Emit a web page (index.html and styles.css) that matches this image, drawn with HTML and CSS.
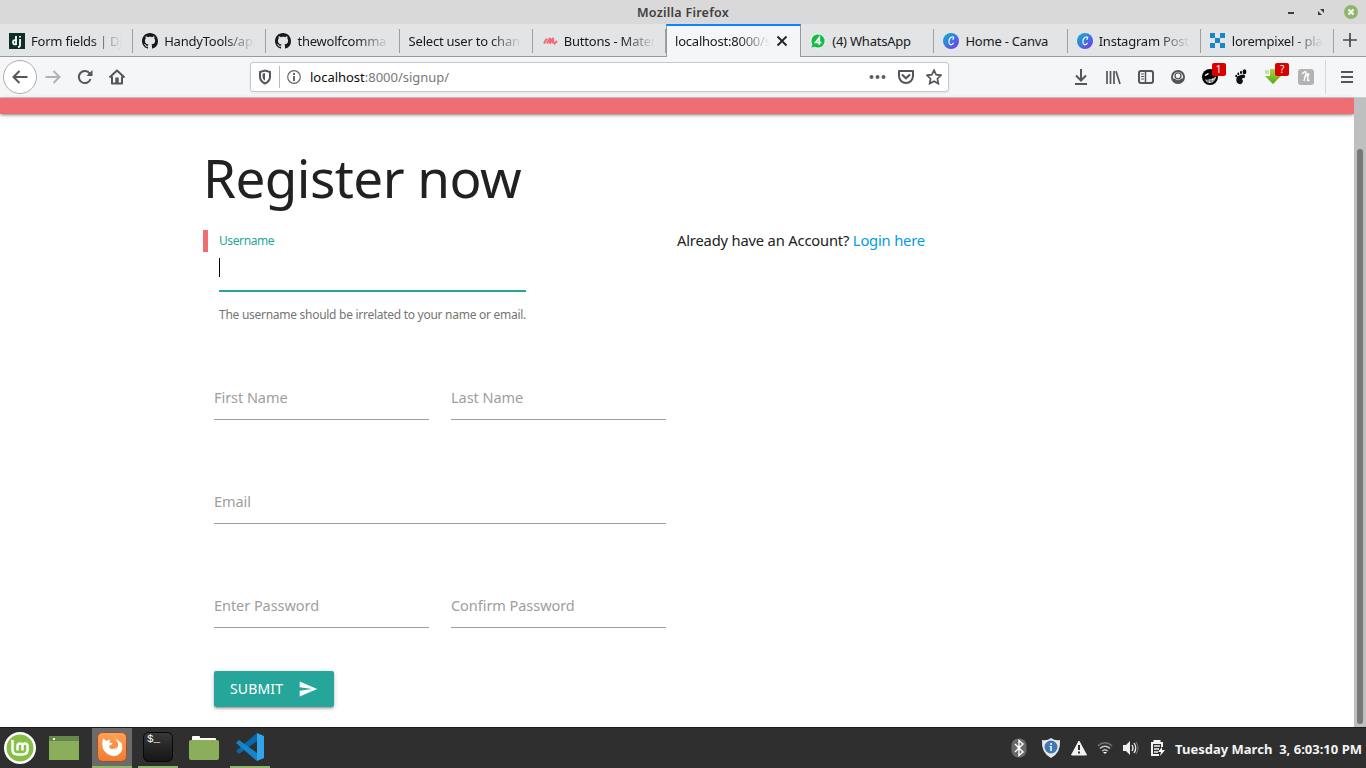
FILE: index.html
```html
<!DOCTYPE html>
<html lang="en">
<head>
<meta charset="utf-8">
<title>Register</title>
<link rel="stylesheet" href="styles.css">
</head>
<body>
<svg class="defs" width="0" height="0">
  <defs>
    <linearGradient id="canva" x1="0" y1="0" x2="1" y2="1"><stop offset="0" stop-color="#08b6cc"/><stop offset=".5" stop-color="#3c78dc"/><stop offset="1" stop-color="#7b2bea"/></linearGradient>
    <linearGradient id="orange" x1="0" y1="0" x2="0" y2="1"><stop offset="0" stop-color="#ffa257"/><stop offset="1" stop-color="#f07b32"/></linearGradient>
    <linearGradient id="black" x1="0" y1="0" x2="0" y2="1"><stop offset="0" stop-color="#383838"/><stop offset="1" stop-color="#151515"/></linearGradient>
    <linearGradient id="lime" x1="0" y1="0" x2="0" y2="1"><stop offset="0" stop-color="#a5d94c"/><stop offset="1" stop-color="#56a50b"/></linearGradient>
    <symbol id="github" viewBox="0 0 16 16"><path fill="#17191c" d="M8 0C3.58 0 0 3.58 0 8c0 3.54 2.29 6.53 5.47 7.59.4.07.55-.17.55-.38 0-.19-.01-.82-.01-1.49-2.01.37-2.53-.49-2.69-.94-.09-.23-.48-.94-.82-1.13-.28-.15-.68-.52-.01-.53.63-.01 1.08.58 1.23.82.72 1.21 1.87.87 2.33.66.07-.52.28-.87.51-1.07-1.78-.2-3.64-.89-3.64-3.95 0-.87.31-1.59.82-2.15-.08-.2-.36-1.02.08-2.12 0 0 .67-.21 2.2.82.64-.18 1.32-.27 2-.27s1.36.09 2 .27c1.53-1.04 2.2-.82 2.2-.82.44 1.1.16 1.92.08 2.12.51.56.82 1.27.82 2.15 0 3.07-1.87 3.75-3.65 3.95.29.25.54.73.54 1.48 0 1.07-.01 1.93-.01 2.2 0 .21.15.46.55.38A8.01 8.01 0 0 0 16 8c0-4.42-3.58-8-8-8z"/></symbol>
    <symbol id="canvaicon" viewBox="0 0 16 16"><circle cx="8" cy="8" r="8" fill="url(#canva)"/><path d="M10 6.2c1-1 .8-2.3-.6-2.3C7.500 3.900 5.900 6.400 5.900 9c0 3.300 2.600 3.500 4.300 1.300" fill="none" stroke="#e4f5ff" stroke-width="1.300" stroke-linecap="round"/></symbol>
  </defs>
</svg>

<header class="titlebar">
  <span class="window-title">Mozilla Firefox</span>
  <div class="window-controls">
    <svg class="minimize" width="10" height="16"><path d="M2 8h6v2H2z" fill="#3c3c3c"/></svg>
    <svg width="10" height="16"><path d="M4 5h4v4zM2 7l4 4H2z" fill="#3c3c3c"/></svg>
    <svg width="14" height="16"><circle cx="7" cy="8" r="7" fill="#8fb56b"/><path d="M4.500 5.500l5 5m0-5l-5 5" stroke="#fff" stroke-width="2"/></svg>
  </div>
</header>

<nav class="tabstrip">
  <div class="tabs">
    <div class="tab"><svg width="16" height="16"><path d="M0 0h16v16H0z" fill="#0c3025"/><path d="M7 3v9M7 7.300C3 6 3 12.500 7 11.300M11 6v6.500q0 1.500-2 1.500M11 3v1.500" fill="none" stroke="#fff" stroke-width="1.800"/></svg><span class="label">Form fields | Dj</span></div>
    <div class="tab"><svg width="16" height="16"><use href="#github"/></svg><span class="label">HandyTools/app</span></div>
    <div class="tab"><svg width="16" height="16"><use href="#github"/></svg><span class="label">thewolfcomma</span></div>
    <div class="tab"><span class="label">Select user to chan</span></div>
    <div class="tab"><svg width="16" height="16"><path d="M2 10.500l2.800-5M5 10.500l3-5.500v5.500L11 5v5.500M12 9l.6 1.500L15 8" fill="none" stroke="#f46877" stroke-width="2"/></svg><span class="label">Buttons - Mater</span></div>
    <div class="tab active"><span class="label">localhost:8000/s</span><svg class="close" width="12" height="12"><path d="M1.500 1.500l9 9m0-9l-9 9" stroke="#202124" stroke-width="1.800"/></svg></div>
    <div class="tab"><svg width="16" height="16"><path d="M8 1a7 7 0 1 1-3.200 13.200L.7 15.400l1.200-4A7 7 0 0 1 8 1z" fill="#12bd45" stroke="#fff" stroke-width=".8"/><path d="M9.300 12V4.500L5.500 9.500h6" fill="none" stroke="#fff" stroke-width="1.600"/></svg><span class="label whole">(4) WhatsApp</span></div>
    <div class="tab"><svg width="16" height="16"><use href="#canvaicon"/></svg><span class="label whole">Home - Canva</span></div>
    <div class="tab"><svg width="16" height="16"><use href="#canvaicon"/></svg><span class="label">Instagram Post</span></div>
    <div class="tab"><svg width="16" height="16"><path fill="#1687c9" d="M0 0h5v5H0zM10 0h5v5h-5zM5 5h5v5H5zM0 10h5v5H0zM10 10h5v5h-5z"/></svg><span class="label">lorempixel - pla</span></div>
  </div>
  <svg class="newtab" width="14" height="14"><path d="M7 0v14M0 7h14" stroke="#4a4a4f" stroke-width="1.700"/></svg>
</nav>

<div class="toolbar">
  <div class="nav-buttons">
    <span class="back"><svg width="18" height="16"><path d="M16.500 8H2.500M8.500 2L2.500 8l6 6" class="ico"/></svg></span>
    <svg width="18" height="16" class="faded"><path d="M1.500 8h14M9.500 2l6 6-6 6" class="ico"/></svg>
    <svg width="16" height="16"><path d="M13.500 10A6 6 0 1 1 12.700 4.600" class="ico"/><path d="M15.500 1v6h-6z" fill="#55565b"/></svg>
    <svg width="18" height="16"><path d="M1.500 8.500L9 1.500l7.500 7M4 7.500v7h10v-7" class="ico" stroke-linejoin="round"/><path d="M7.300 8.500h3.400v6H7.300z" fill="#55565b"/></svg>
  </div>
  <div class="urlbar">
    <svg width="12" height="16"><path d="M1 3l5-1.500L11 3v5q0 4-5 6.500Q1 12 1 8z" class="ico"/><path d="M6 4L3.500 4.800V8q0 2.500 2.500 3.800z" fill="#55565b"/></svg>
    <i class="url-sep"></i>
    <svg width="14" height="14"><circle cx="7" cy="7" r="6.300" fill="none" stroke="#66676b" stroke-width="1.200"/><path d="M6 6h2v5H6zM6 3h2v2H6z" fill="#66676b"/></svg>
    <span class="url"><b>localhost</b>:8000/signup/</span>
    <div class="url-actions">
      <svg width="17" height="16" fill="#5c5d61"><circle cx="2.500" cy="8" r="2"/><circle cx="8.500" cy="8" r="2"/><circle cx="14.500" cy="8" r="2"/></svg>
      <svg width="16" height="16"><path d="M1 2h14v5a7 7 0 0 1-14 0z" class="ico" stroke-linejoin="round"/><path d="M4.500 6L8 9.300 11.500 6" class="ico" stroke-linecap="round"/></svg>
      <svg width="16" height="16"><path d="M8 1.200l2.100 4.500 4.900.6-3.600 3.400.9 4.900L8 12.200l-4.300 2.400.9-4.900L1 6.300l4.900-.6z" class="ico medium"/></svg>
    </div>
  </div>
  <div class="extensions">
    <svg width="14" height="16"><path d="M7 0v11M2 6.500l5 5 5-5M1 15h12" class="ico"/></svg>
    <svg width="16" height="16"><path d="M2 2v13M5.500 2v13M9 2v13M11 2.300L15 15" class="ico medium"/></svg>
    <svg width="16" height="16"><rect x="1" y="2" width="14" height="12" rx="2" class="ico"/><path d="M7.500 2v12" class="ico narrow"/><path d="M3 5h3M3 7.500h3M3 10h3" class="ico thin"/></svg>
    <svg width="14" height="16"><circle cx="7" cy="8" r="6" class="ico"/><path d="M1 9.500h2.500Q7 13 10.500 9.500H13Q12 14.500 7 14.500T1 9.500z" fill="#55565b"/><circle cx="7" cy="6.800" r="3" fill="#f5f6f8" stroke="#55565b" stroke-width="1.300"/></svg>
    <div class="ext"><svg width="16" height="16"><circle cx="8" cy="8" r="8" fill="#000"/><path d="M2.500 6l3.500-2 1 1-3.500 2zM3 10.500q6 1 11-3-1 6.500-6 6.500-3.500 0-5-3.500z" fill="#fff"/><path d="M6 10v4M9 9v5M12 8v4M3 12h9" stroke="#000" stroke-width=".6"/></svg><span class="badge">1</span></div>
    <svg width="14" height="16"><path d="M3 7.500q7-3.500 8-1 .7 2.500-2 2.700-2 .3-.8 1.300 1.500 1 .3 3-1.500 2.500-4 1.300Q1 13 3 7.500z" fill="#111"/><ellipse cx="10.500" cy="2.700" rx="1.900" ry="2.500"/><ellipse cx="7" cy="3.400" rx="1" ry="1.600"/><ellipse cx="4.300" cy="4.900" rx=".9" ry="1.400"/><ellipse cx="2.200" cy="7" rx=".9" ry="1.200"/></svg>
    <div class="ext"><svg width="16" height="16"><path d="M5 0h6v7h5l-8 8-8-8h5z" fill="url(#lime)"/><path d="M1 1v4M3 1v4" stroke="#94c951"/></svg><span class="badge">?</span></div>
    <svg width="16" height="16"><rect width="16" height="16" rx="3" fill="#b3b3b3"/><path d="M4 5q4-4 4-1L6 12M6.500 8q4-3 3.500 0l-.5 3q0 1 2 0M8.500 5.500h3M10 4v3" fill="none" stroke="#fff" stroke-width="1.400"/></svg>
  </div>
  <div class="menu"><svg width="12" height="16"><path d="M0 3h12M0 8h12M0 13h12" class="ico"/></svg></div>
</div>

<main class="viewport">
  <div class="page">
    <div class="navbar"></div>
    <div class="container">
      <h2>Register now</h2>
      <div class="row">
        <form class="form">
          <div class="username-wrap">
            <label class="username-label">Username</label>
            <div class="username-input"><i class="caret"></i></div>
            <p class="helper">The username should be irrelated to your name or email.</p>
          </div>
          <div class="fields names">
            <div class="field">First Name</div>
            <div class="field">Last Name</div>
          </div>
          <div class="fields"><div class="field">Email</div></div>
          <div class="fields">
            <div class="field">Enter Password</div>
            <div class="field">Confirm Password</div>
          </div>
          <button type="button" class="submit"><span>SUBMIT</span><svg width="20" height="20" viewBox="0 0 24 24"><path fill="#fff" d="M2.010 21L23 12 2.010 3 2 10l15 2-15 2z"/></svg></button>
        </form>
        <p class="login">Already have an Account? <a>Login here</a></p>
      </div>
    </div>
  </div>
  <div class="scrollbar"><div class="thumb"></div></div>
</main>

<footer class="taskbar">
  <div class="apps">
    <div class="app mint"><svg width="32" height="32"><circle cx="16" cy="16" r="16" fill="#fff"/><circle cx="16" cy="16" r="13.500" fill="#87bf47"/><path d="M8.500 8v9.500q0 5 5 5h5q5 0 5-5V14q0-2.500-2.500-2.500T18.500 14v4.500M18.500 14q0-2.500-2.500-2.500T13.500 14v4.500" fill="none" stroke="#fff" stroke-width="2.500"/></svg></div>
    <div class="app desktop"><svg width="30" height="24"><path d="M0 0h30v24H0z" fill="#8aae59"/><path d="M0 0h30v5H0z" fill="#65874a"/><path d="M4 2h2v2H4z" fill="#fff"/></svg></div>
    <div class="app open current"><svg width="30" height="30"><rect x=".5" y=".5" width="29" height="29" rx="5" fill="url(#orange)" stroke="#9b5227"/><path d="M6 6.500L9.500 9q2-1.500 4-1.500-1.500 1.500-1 3l3 .7q-1 2-3.500 2.800.5 3.500 4 3 2.500-.5 4-2-1 2.500-3 3 3-.5 4-4 .8-4-3-7.500 4.500 2 5.500 5V9q4 7-.5 12.500-6 5-12.500.500Q3 17 6 6.500z" fill="#fff"/></svg></div>
    <div class="app open"><svg width="30" height="30"><rect x=".5" y=".5" width="29" height="29" rx="5" fill="url(#black)" stroke="#080808"/></svg><span class="prompt">$_</span></div>
    <div class="app"><svg width="30" height="26"><path d="M3 4V2q0-1 1-1h6q1 0 1 1v1h15q1 0 1 1v2H3z" fill="#fff"/><rect y="5" width="30" height="20" rx="2" fill="#8aae59"/></svg></div>
    <div class="app open"><svg width="28" height="28" viewBox="0 0 28 28"><path d="M21 0v8L3 21l-3-3z" fill="#0868ad"/><path d="M0 10l3-3 18 13v8z" fill="#1784ca"/><path d="M21 0l7 3v22l-7 3z" fill="#30a5ec"/></svg></div>
  </div>
  <div class="tray">
    <svg class="bluetooth" width="16" height="20"><rect x=".5" y=".5" width="15" height="19" rx="7" fill="#696969"/><path d="M4 6l8 8-4 3.500v-15L12 6l-8 8" fill="none" stroke="#fff" stroke-width="1.400"/></svg>
    <svg width="20" height="20"><path d="M10 0q4 3 9 2 1 13-9 18Q0 15 1 2q5 1 9-2z" fill="#e8e8e8"/><circle cx="10" cy="9" r="6.500" fill="#4178b9"/><path d="M9.300 5h1.500v2H9.300zM8.500 8h2.300v5H9.300V9h-.8z" fill="#fff"/></svg>
    <svg width="16" height="16"><path d="M8 1l7.500 14H.5z" fill="#f2f2f2" stroke="#f2f2f2" stroke-linejoin="round"/><path d="M7 5h2v5H7zM7 11.500h2v2H7z" fill="#2f2f2f"/></svg>
    <svg width="16" height="14"><path d="M.8 5q7.200-6.500 14.400 0" fill="none" stroke="#747474" stroke-width="1.500"/><path d="M3 7.500q5-4.500 10 0M5.300 10Q8 7.500 10.700 10" fill="none" stroke="#c9c9c9" stroke-width="1.600"/><path d="M6 11h4l-2 2z" fill="#fff"/></svg>
    <svg width="16" height="16"><path d="M0 5h3l4-4v14l-4-4H0z" fill="#eee"/><path d="M9 5q2 3 0 6M11 3q3.500 5 0 10" fill="none" stroke="#eee" stroke-width="1.300"/><path d="M13 2q4 6 0 12" fill="none" stroke="#777"/></svg>
    <svg class="battery" width="16" height="17"><path d="M9 15H2V3h10v4M4.500 3V1h5v2" fill="none" stroke="#f2f2f2" stroke-width="2"/><path d="M4 6h6M4 9h5M4 12h4" stroke="#f2f2f2" stroke-width="1.500"/><path d="M12 7l-4 5h3l-1 4 5-6h-3z" fill="#fff"/></svg>
    <time>Tuesday March&nbsp; 3, 6:03:10 PM</time>
  </div>
</footer>
</body>
</html>
```
FILE: styles.css
```css
* { box-sizing: border-box; }
html, body { margin: 0; height: 100%; }
body { width: 1366px; height: 768px; overflow: hidden; display: flex; flex-direction: column; font: 13px "Noto Sans", "Open Sans", sans-serif; background: #fff; }
svg { display: block; flex: none; }
.defs { position: absolute; }
.ico { fill: none; stroke: #55565b; stroke-width: 2; }
.medium { stroke-width: 1.7; }
.narrow { stroke-width: 1.5; }
.thin { stroke-width: 1; }

.titlebar { height: 24px; background: #d9d9d9; display: grid; grid-template: 24px / 1fr auto 1fr; align-items: center; flex: none; }
.window-title { grid-column: 2; align-self: start; color: #404040; font-weight: 600; font-size: 12.5px; line-height: 26px; letter-spacing: .25px; }
.window-controls { justify-self: end; display: flex; gap: 18px; padding-right: 8px; align-items: center; }
.minimize { margin-right: 2px; }

.tabstrip { height: 33px; display: flex; background: #e3e4e6; border-bottom: 1px solid #98999b; flex: none; }
.tabs { display: flex; width: 1334px; height: 33px; }
.tab { flex: 1 1 0; min-width: 0; display: flex; align-items: center; gap: 6px; padding: 1px 11px 0 9px; position: relative; }
.tab::after { content: ""; position: absolute; right: 0; top: 5px; height: 24px; width: 1px; background: #a0a0a2; }
.label { flex: 1; min-width: 0; white-space: nowrap; color: #18191b; font-size: 13px; line-height: 20px; -webkit-mask-image: linear-gradient(to left, transparent 0, #000 32px); mask-image: linear-gradient(to left, transparent 0, #000 32px); letter-spacing: -.22px; }
.label.whole { -webkit-mask-image: none; mask-image: none; }
.tab.active { background: #f5f6f8; border: solid #98999b; border-width: 0 1px; border-top: 2px solid #0a84ff; padding: 0 12px 1px 8px; }
.tab.active::after { display: none; }
.newtab { margin: 9px 0 0 9px; }

.toolbar { height: 41px; background: #f5f6f8; border-bottom: 1px solid #ccc; display: flex; align-items: center; flex: none; }
.nav-buttons { width: 250px; padding-left: 3px; display: flex; align-items: center; gap: 15px; }
.back { width: 34px; height: 34px; border: 1px solid #adadaf; border-radius: 50%; background: #fff; display: grid; place-items: center; margin-right: -8px; }
.faded { opacity: .42; }
.urlbar { width: 699px; height: 30px; background: #fff; border: 1px solid #c7c8ca; border-radius: 3px; display: flex; align-items: center; padding: 0 6px 0 8px; box-shadow: 0 1px 3px #0001; }
.url-sep { width: 1px; height: 22px; background: #b8b9bb; margin: 0 7px 0 8px; }
.url { margin-left: 9px; color: #77787b; line-height: 20px; letter-spacing: -.02px; }
.url b { color: #0c0c0d; font-weight: 400; }
.url-actions { display: flex; margin-left: auto; gap: 12px; }
.extensions { flex: 1; display: flex; justify-content: flex-end; gap: 16.8px; padding-right: 11px; align-items: center; }
.ext { position: relative; }
.badge { position: absolute; left: 10px; top: -6px; width: 14px; height: 13px; border-radius: 2px; background: #d90000; color: #fff; font-size: 10px; line-height: 13px; text-align: center; }
.menu { width: 41px; height: 34px; border-left: 1px solid #d5d6d8; display: flex; align-items: center; padding-left: 15px; }

.viewport { flex: 1; display: flex; min-height: 0; background: #fff; }
.page { width: 1354px; }
.navbar { height: 16px; background: #ee6e73; box-shadow: 0 2px 2px rgba(0,0,0,.14), 0 3px 1px -2px rgba(0,0,0,.12), 0 1px 5px rgba(0,0,0,.2); }
.container { width: 948px; margin-left: 203px; }
h2 { margin: 34px 0 22px; height: 60px; line-height: 60px; font-size: 53px; font-weight: 400; color: #212121; letter-spacing: -.55px; white-space: nowrap; }
.row { display: grid; grid-template-columns: 474px 474px; }
.username-wrap { width: 323px; padding-left: 16px; position: relative; height: 112px; }
.username-wrap::before { content: ""; position: absolute; left: 0; top: 0; width: 5px; height: 22px; background: #ee6e73; }
.username-label { display: block; height: 22px; line-height: 22px; color: #26a69a; font-size: 12px; letter-spacing: -.4px; }
.username-input { height: 40px; border-bottom: 2px solid #26a69a; padding-top: 6px; }
.caret { display: block; width: 1px; height: 19px; background: #000; }
.helper { margin: 14px 0 0; height: 18px; line-height: 18px; font-size: 12px; color: #757575; white-space: nowrap; letter-spacing: -.275px; }
.fields { display: flex; gap: 22px; padding: 0 11px; margin-bottom: 59px; }
.names { margin-top: 33px; }
.fields .field { flex: 1; height: 45px; border-bottom: 1px solid #9e9e9e; color: #9e9e9e; font-size: 14.5px; line-height: 44px; white-space: nowrap; letter-spacing: -.05px; }
.submit { margin: -16px 0 0 11px; width: 120px; height: 36px; border: 0; border-radius: 2px; padding: 0 16px; background: #26a69a; display: flex; align-items: center; justify-content: space-between; box-shadow: 0 2px 2px rgba(0,0,0,.14), 0 3px 1px -2px rgba(0,0,0,.12), 0 1px 5px rgba(0,0,0,.2); color: #fff; font: 14px/36px "Noto Sans", sans-serif; letter-spacing: .15px; }
.login { margin: 0; line-height: 20px; font-size: 14.7px; color: #212121; white-space: nowrap; letter-spacing: -.16px; }
.login a { color: #039be5; }
.scrollbar { width: 12px; background: #bebfbf; padding: 51px 3px 3px; }
.thumb { height: 100%; background: #777878; border-radius: 3px; }

.taskbar { height: 41px; background: #2f2f2f; border-top: 1px solid #1c1c1c; display: flex; justify-content: space-between; flex: none; }
.apps { display: flex; gap: 6px; }
.app { width: 40px; height: 40px; display: grid; place-items: center; position: relative; }
.app.desktop { padding-right: 4px; }
.app.open { border-bottom: 2px solid #8fb56b; }
.app.current { background: #6b6b6b; }
.prompt { position: absolute; left: 9px; top: 4px; color: #fff; font: 11px/14px "Liberation Mono", monospace; }
.tray { display: flex; align-items: center; gap: 10px; padding-right: 4px; }
.bluetooth { margin-right: 4px; }
.battery { margin: 0 -1px 0 1px; }
time { color: #f4f4f4; font-size: 13px; font-weight: 700; white-space: nowrap; line-height: 20px; padding-top: 2px; letter-spacing: .01px; }
```
